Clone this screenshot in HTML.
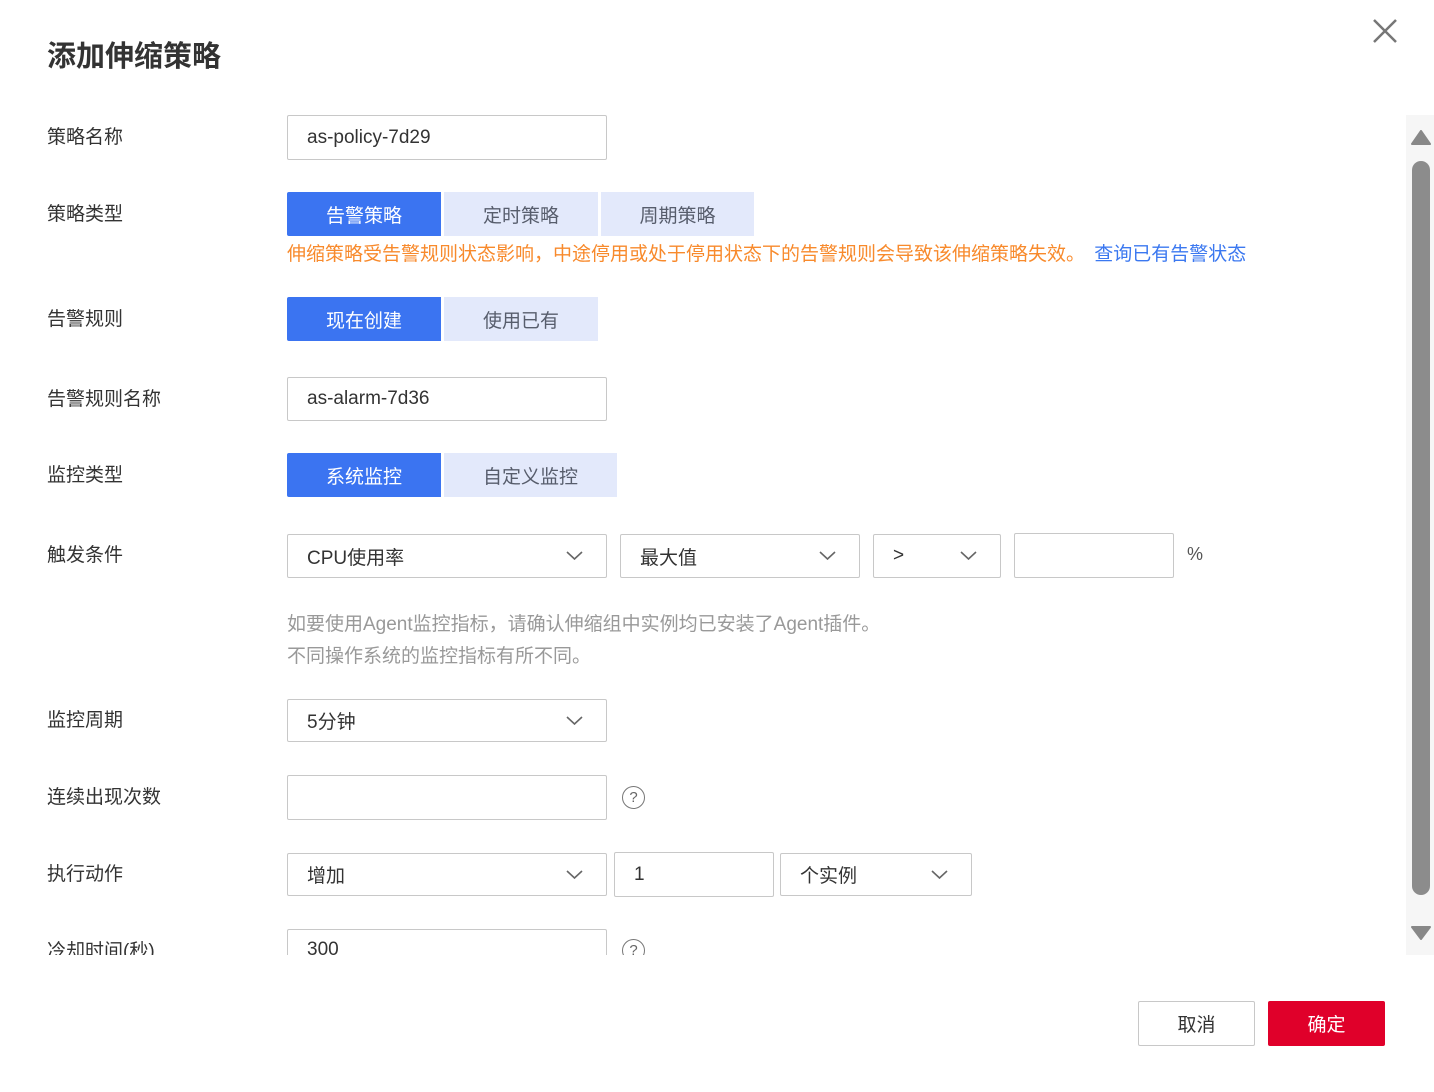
<!DOCTYPE html>
<html><head><meta charset="utf-8"><style>
*{margin:0;padding:0;box-sizing:border-box}
html,body{width:1434px;height:1092px;background:#fff;overflow:hidden;font-family:"Liberation Sans","Noto Sans CJK SC",sans-serif;color:#252b3a}
.a{position:absolute}
.lbl{position:absolute;left:47px;font-size:19px;color:#333;line-height:24px}
.in{position:absolute;border:1px solid #c8c8c8;border-radius:2px;background:#fff;font-size:19px;color:#333;padding-left:19px;display:flex;align-items:center}
.btn{position:absolute;height:44px;font-size:19px;display:flex;align-items:center;justify-content:center;background:#e3e9fb;color:#575d6c}
.btn.on{background:#3b74f1;color:#fff;border-radius:2px 0 0 2px}
.chev{position:absolute;right:23px;top:50%;margin-top:-5px;width:17px;height:9px}
.q{position:absolute;width:23px;height:23px;border:1.5px solid #777;border-radius:50%;font-size:15px;color:#666;display:flex;align-items:center;justify-content:center}
</style></head><body>
<div class="a" style="left:47px;top:38px;font-size:29px;font-weight:bold;color:#333;line-height:38px">添加伸缩策略</div>
<svg class="a" style="left:1372px;top:18px" width="26" height="26" viewBox="0 0 26 26"><path d="M2 2L24 24M24 2L2 24" stroke="#777" stroke-width="2.5"/></svg>

<div class="a" style="left:0;top:0;width:1434px;height:955px;overflow:hidden">
<div class="lbl" style="top:126px">策略名称</div>
<div class="in" style="left:287px;top:115px;width:320px;height:45px">as-policy-7d29</div>

<div class="lbl" style="top:203px">策略类型</div>
<div class="btn on" style="left:287px;top:192px;width:154px">告警策略</div>
<div class="btn" style="left:444px;top:192px;width:154px">定时策略</div>
<div class="btn" style="left:601px;top:192px;width:153px">周期策略</div>
<div class="a" style="left:287px;top:242px;font-size:19px;line-height:26px;color:#f88a2c;white-space:nowrap">伸缩策略受告警规则状态影响，中途停用或处于停用状态下的告警规则会导致该伸缩策略失效。 <span style="color:#3b78f0;margin-left:4px">查询已有告警状态</span></div>

<div class="lbl" style="top:308px">告警规则</div>
<div class="btn on" style="left:287px;top:297px;width:154px">现在创建</div>
<div class="btn" style="left:444px;top:297px;width:154px">使用已有</div>

<div class="lbl" style="top:388px">告警规则名称</div>
<div class="in" style="left:287px;top:377px;width:320px;height:44px">as-alarm-7d36</div>

<div class="lbl" style="top:464px">监控类型</div>
<div class="btn on" style="left:287px;top:453px;width:154px">系统监控</div>
<div class="btn" style="left:444px;top:453px;width:173px">自定义监控</div>

<div class="lbl" style="top:544px">触发条件</div>
<div class="in" style="left:287px;top:534px;width:320px;height:44px">CPU使用率<svg class="chev" viewBox="0 0 17 9"><path d="M1 1L8.5 8L16 1" stroke="#666" stroke-width="1.6" fill="none"/></svg></div>
<div class="in" style="left:620px;top:534px;width:240px;height:44px">最大值<svg class="chev" viewBox="0 0 17 9"><path d="M1 1L8.5 8L16 1" stroke="#666" stroke-width="1.6" fill="none"/></svg></div>
<div class="in" style="left:873px;top:534px;width:128px;height:44px">&gt;<svg class="chev" viewBox="0 0 17 9"><path d="M1 1L8.5 8L16 1" stroke="#666" stroke-width="1.6" fill="none"/></svg></div>
<div class="in" style="left:1014px;top:533px;width:160px;height:45px"></div>
<div class="a" style="left:1187px;top:544px;font-size:18px;color:#555">%</div>
<div class="a" style="left:287px;top:609px;font-size:19px;line-height:32px;color:#999">如要使用Agent监控指标，请确认伸缩组中实例均已安装了Agent插件。<br>不同操作系统的监控指标有所不同。</div>

<div class="lbl" style="top:709px">监控周期</div>
<div class="in" style="left:287px;top:699px;width:320px;height:43px">5分钟<svg class="chev" viewBox="0 0 17 9"><path d="M1 1L8.5 8L16 1" stroke="#666" stroke-width="1.6" fill="none"/></svg></div>

<div class="lbl" style="top:786px">连续出现次数</div>
<div class="in" style="left:287px;top:775px;width:320px;height:45px"></div>
<div class="q" style="left:622px;top:786px">?</div>

<div class="lbl" style="top:863px">执行动作</div>
<div class="in" style="left:287px;top:853px;width:320px;height:43px">增加<svg class="chev" viewBox="0 0 17 9"><path d="M1 1L8.5 8L16 1" stroke="#666" stroke-width="1.6" fill="none"/></svg></div>
<div class="in" style="left:614px;top:852px;width:160px;height:45px">1</div>
<div class="in" style="left:780px;top:853px;width:192px;height:43px">个实例<svg class="chev" viewBox="0 0 17 9"><path d="M1 1L8.5 8L16 1" stroke="#666" stroke-width="1.6" fill="none"/></svg></div>

<div class="lbl" style="top:940px">冷却时间(秒)</div>
<div class="in" style="left:287px;top:929px;width:320px;height:44px;align-items:flex-start;padding-top:9px">300</div>
<div class="q" style="left:622px;top:939px">?</div>
</div>

<div class="a" style="left:1406px;top:115px;width:28px;height:840px;background:#f6f6f6"></div>
<svg class="a" style="left:1411px;top:130px" width="20" height="16"><path d="M10 1L19 14H1Z" fill="#888" stroke="#888" stroke-linejoin="round" stroke-width="2"/></svg>
<div class="a" style="left:1412px;top:161px;width:18px;height:734px;background:#8c8c8c;border-radius:9px"></div>
<svg class="a" style="left:1411px;top:925px" width="20" height="16"><path d="M1 2H19L10 14Z" fill="#888" stroke="#888" stroke-linejoin="round" stroke-width="2"/></svg>

<div class="a" style="left:1138px;top:1001px;width:117px;height:45px;border:1px solid #c8c8c8;border-radius:2px;display:flex;align-items:center;justify-content:center;font-size:19px;color:#333">取消</div>
<div class="a" style="left:1268px;top:1001px;width:117px;height:45px;background:#e0002a;border-radius:2px;display:flex;align-items:center;justify-content:center;font-size:19px;color:#fff">确定</div>
</body></html>
